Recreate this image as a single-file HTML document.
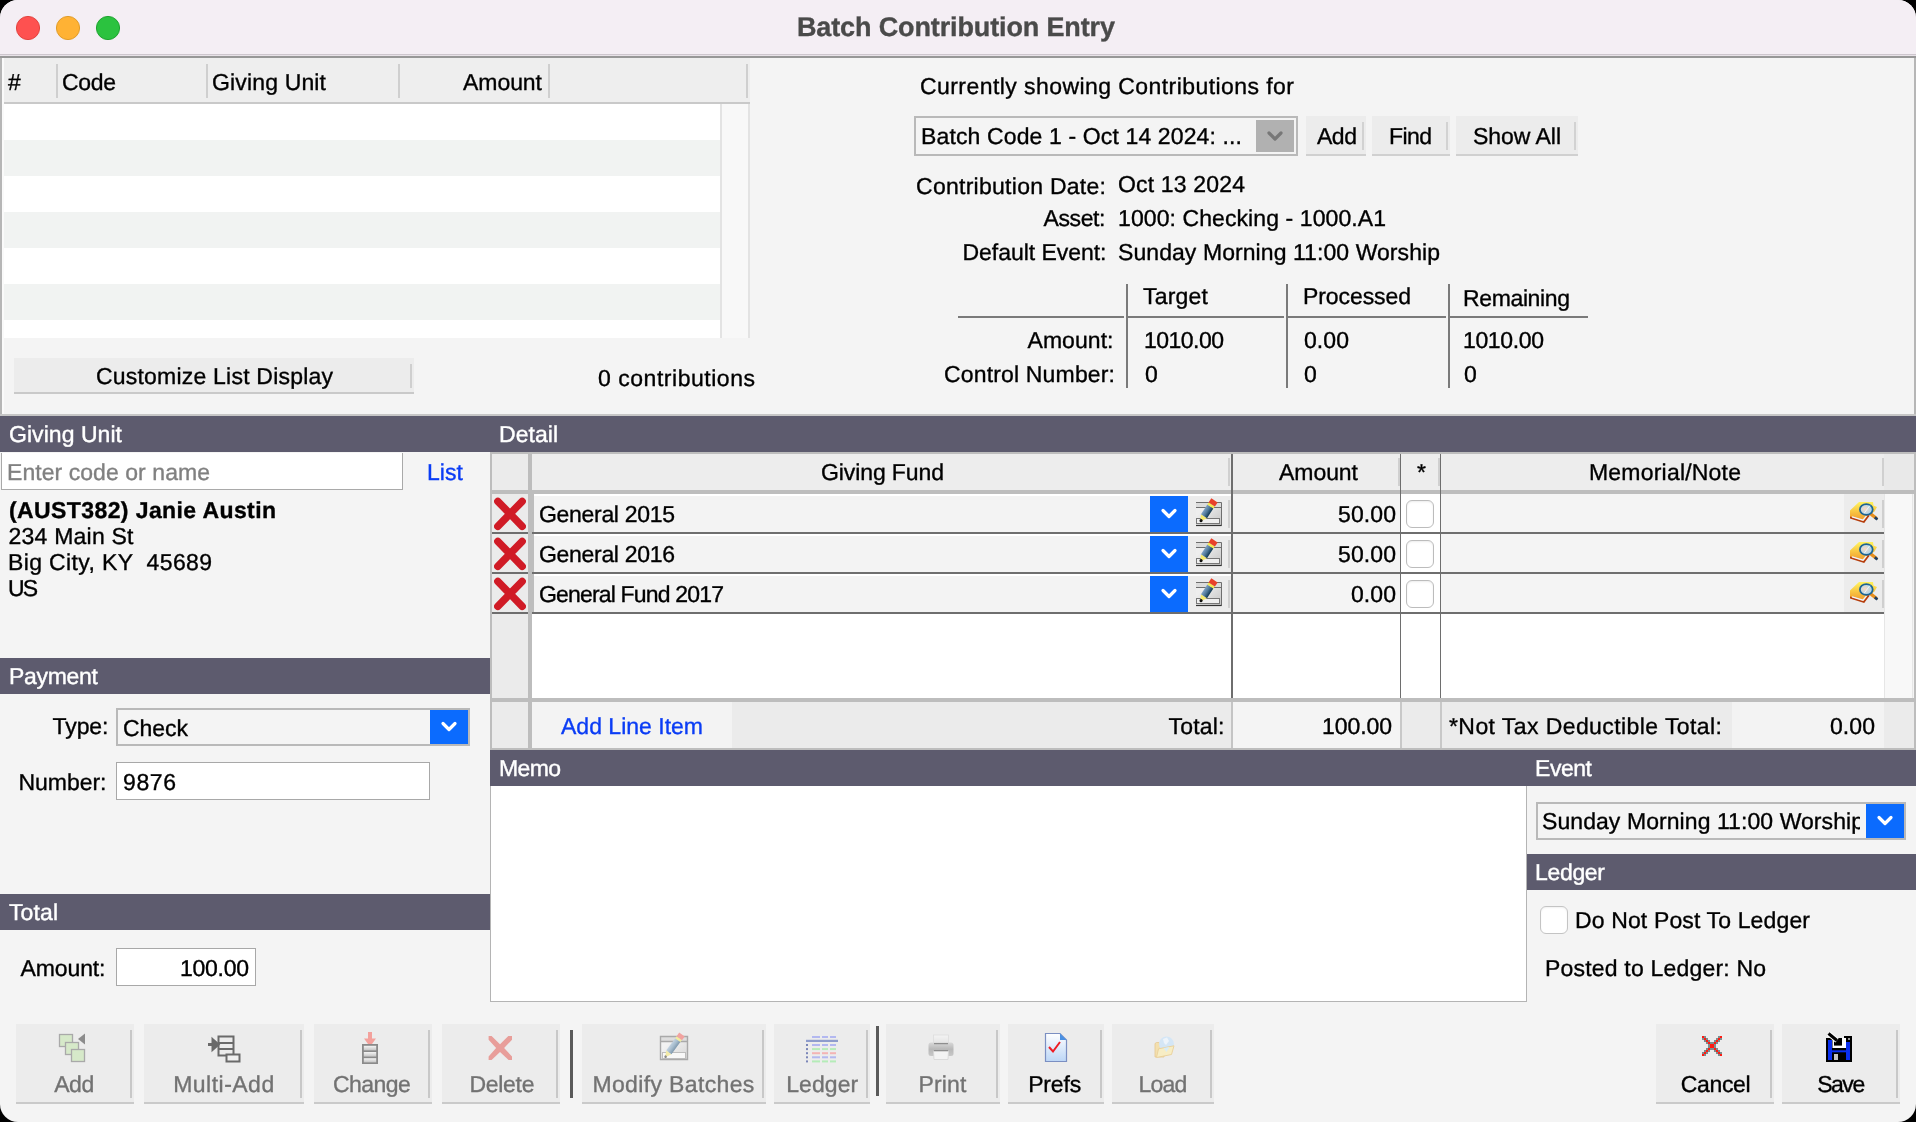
<!DOCTYPE html>
<html><head><meta charset="utf-8"><title>Batch Contribution Entry</title>
<style>
html,body{margin:0;padding:0;width:1916px;height:1122px;overflow:hidden;background:#000;}
#win{position:absolute;left:0;top:0;width:1916px;height:1122px;border-radius:18px;overflow:hidden;background:#f4f4f4;font-family:'Liberation Sans', sans-serif;text-rendering:geometricPrecision;will-change:transform;}
#win div{-webkit-text-stroke:0.35px currentColor;}
#win div,#win svg{position:absolute;}
</style></head><body><div id="win">
<div style="left:0px;top:0px;width:1916px;height:54px;background:#f4eef4;"></div>
<div style="left:0px;top:54px;width:1916px;height:1px;background:#cdc6cd;"></div>
<div style="left:0px;top:55px;width:1916px;height:1px;background:#e8e2e8;"></div>
<div style="left:0px;top:56px;width:1916px;height:2px;background:#979797;"></div>
<svg style="left:15px;top:15px;" width="26" height="26" viewBox="0 0 26 26"><circle cx="13" cy="13" r="11.6" fill="#fe5150" stroke="#e2443f" stroke-width="1"/></svg>
<svg style="left:55px;top:15px;" width="26" height="26" viewBox="0 0 26 26"><circle cx="13" cy="13" r="11.6" fill="#ffb234" stroke="#e09c2a" stroke-width="1"/></svg>
<svg style="left:95px;top:15px;" width="26" height="26" viewBox="0 0 26 26"><circle cx="13" cy="13" r="11.6" fill="#2bc23f" stroke="#1fa330" stroke-width="1"/></svg>
<div style="left:797.00px;top:14.00px;font-size:27px;line-height:27px;font-weight:700;color:#4a4a4a;letter-spacing:-0.130px;white-space:pre;">Batch Contribution Entry</div>
<div style="left:0px;top:58px;width:2px;height:357px;background:#b6b6b6;"></div>
<div style="left:2px;top:58px;width:2px;height:357px;background:#fafafa;"></div>
<div style="left:1914px;top:58px;width:2px;height:357px;background:#b6b6b6;"></div>
<div style="left:0px;top:414px;width:1916px;height:2px;background:#c6c6c6;"></div>
<div style="left:4px;top:58px;width:746px;height:44px;background:#eeeeee;"></div>
<div style="left:4px;top:102px;width:746px;height:2px;background:#c9c9c9;"></div>
<div style="left:56px;top:64px;width:2px;height:34px;background:#cfcfcf;"></div>
<div style="left:206px;top:64px;width:2px;height:34px;background:#cfcfcf;"></div>
<div style="left:398px;top:64px;width:2px;height:34px;background:#cfcfcf;"></div>
<div style="left:548px;top:64px;width:2px;height:34px;background:#cfcfcf;"></div>
<div style="left:746px;top:64px;width:2px;height:34px;background:#cfcfcf;"></div>
<div style="left:8.00px;top:71.00px;font-size:23px;line-height:23px;font-weight:400;color:#000;letter-spacing:0.000px;white-space:pre;">#</div>
<div style="left:62.00px;top:71.00px;font-size:23px;line-height:23px;font-weight:400;color:#000;letter-spacing:-0.328px;white-space:pre;">Code</div>
<div style="left:212.00px;top:71.00px;font-size:23px;line-height:23px;font-weight:400;color:#000;letter-spacing:0.152px;white-space:pre;">Giving Unit</div>
<div style="left:463.00px;top:71.00px;font-size:23px;line-height:23px;font-weight:400;color:#000;letter-spacing:-0.053px;white-space:pre;">Amount</div>
<div style="left:4px;top:104px;width:716px;height:36px;background:#ffffff;"></div>
<div style="left:4px;top:140px;width:716px;height:36px;background:#f1f3f2;"></div>
<div style="left:4px;top:176px;width:716px;height:36px;background:#ffffff;"></div>
<div style="left:4px;top:212px;width:716px;height:36px;background:#f1f3f2;"></div>
<div style="left:4px;top:248px;width:716px;height:36px;background:#ffffff;"></div>
<div style="left:4px;top:284px;width:716px;height:36px;background:#f1f3f2;"></div>
<div style="left:4px;top:320px;width:716px;height:18px;background:#ffffff;"></div>
<div style="left:720px;top:104px;width:2px;height:234px;background:#e3e3e3;"></div>
<div style="left:722px;top:104px;width:26px;height:234px;background:#f8f8f8;"></div>
<div style="left:748px;top:104px;width:2px;height:234px;background:#e3e3e3;"></div>
<div style="left:14px;top:358px;width:400px;height:36px;background:#ececec;"></div>
<div style="left:14px;top:392px;width:400px;height:2px;background:#c9c9c9;"></div>
<div style="left:410px;top:364px;width:2px;height:24px;background:#cfcfcf;"></div>
<div style="left:96.00px;top:365.00px;font-size:23px;line-height:23px;font-weight:400;color:#000;letter-spacing:0.208px;white-space:pre;">Customize List Display</div>
<div style="left:598.00px;top:367.00px;font-size:23px;line-height:23px;font-weight:400;color:#000;letter-spacing:0.529px;white-space:pre;">0 contributions</div>
<div style="left:920.00px;top:75.00px;font-size:23px;line-height:23px;font-weight:400;color:#000;letter-spacing:0.435px;white-space:pre;">Currently showing Contributions for</div>
<div style="left:914px;top:116px;width:384px;height:40px;box-sizing:border-box;border:2px solid #b9b9b9;background:#f4f4f4;"></div>
<div style="left:1256px;top:120px;width:38px;height:32px;background:#b1b1b1;"></div>
<svg style="left:1266px;top:128px;" width="18" height="14" viewBox="0 0 18 14"><polyline points="3,5 9,11 15,5" fill="none" stroke="#777" stroke-width="3.2" stroke-linecap="round" stroke-linejoin="round"/></svg>
<div style="left:921.00px;top:125.00px;font-size:23px;line-height:23px;font-weight:400;color:#000;letter-spacing:0.131px;white-space:pre;">Batch Code 1 - Oct 14 2024: ...</div>
<div style="left:1306px;top:116px;width:60px;height:40px;background:#ececec;"></div>
<div style="left:1306px;top:154px;width:60px;height:2px;background:#d0d0d0;"></div>
<div style="left:1362px;top:122px;width:2px;height:28px;background:#d2d2d2;"></div>
<div style="left:1372px;top:116px;width:78px;height:40px;background:#ececec;"></div>
<div style="left:1372px;top:154px;width:78px;height:2px;background:#d0d0d0;"></div>
<div style="left:1446px;top:122px;width:2px;height:28px;background:#d2d2d2;"></div>
<div style="left:1456px;top:116px;width:122px;height:40px;background:#ececec;"></div>
<div style="left:1456px;top:154px;width:122px;height:2px;background:#d0d0d0;"></div>
<div style="left:1574px;top:122px;width:2px;height:28px;background:#d2d2d2;"></div>
<div style="left:1317.00px;top:125.00px;font-size:23px;line-height:23px;font-weight:400;color:#000;letter-spacing:-0.469px;white-space:pre;">Add</div>
<div style="left:1389.00px;top:125.00px;font-size:23px;line-height:23px;font-weight:400;color:#000;letter-spacing:-0.583px;white-space:pre;">Find</div>
<div style="left:1473.00px;top:125.00px;font-size:23px;line-height:23px;font-weight:400;color:#000;letter-spacing:-0.031px;white-space:pre;">Show All</div>
<div style="left:916.00px;top:175.00px;font-size:23px;line-height:23px;font-weight:400;color:#000;letter-spacing:0.271px;white-space:pre;">Contribution Date:</div>
<div style="left:1118.00px;top:173.00px;font-size:23px;line-height:23px;font-weight:400;color:#000;letter-spacing:0.169px;white-space:pre;">Oct 13 2024</div>
<div style="left:1043.50px;top:207.00px;font-size:23px;line-height:23px;font-weight:400;color:#000;letter-spacing:-0.384px;white-space:pre;">Asset:</div>
<div style="left:1118.00px;top:207.00px;font-size:23px;line-height:23px;font-weight:400;color:#000;letter-spacing:0.088px;white-space:pre;">1000: Checking - 1000.A1</div>
<div style="left:962.50px;top:241.00px;font-size:23px;line-height:23px;font-weight:400;color:#000;letter-spacing:-0.036px;white-space:pre;">Default Event:</div>
<div style="left:1118.00px;top:241.00px;font-size:23px;line-height:23px;font-weight:400;color:#000;letter-spacing:0.072px;white-space:pre;">Sunday Morning 11:00 Worship</div>
<div style="left:958px;top:316px;width:166px;height:2px;background:#7a7a7a;"></div>
<div style="left:1128px;top:316px;width:156px;height:2px;background:#7a7a7a;"></div>
<div style="left:1288px;top:316px;width:158px;height:2px;background:#7a7a7a;"></div>
<div style="left:1450px;top:316px;width:138px;height:2px;background:#7a7a7a;"></div>
<div style="left:1126px;top:284px;width:2px;height:104px;background:#7a7a7a;"></div>
<div style="left:1286px;top:284px;width:2px;height:104px;background:#7a7a7a;"></div>
<div style="left:1448px;top:284px;width:2px;height:104px;background:#7a7a7a;"></div>
<div style="left:1143.00px;top:285.00px;font-size:23px;line-height:23px;font-weight:400;color:#000;letter-spacing:0.212px;white-space:pre;">Target</div>
<div style="left:1303.00px;top:285.00px;font-size:23px;line-height:23px;font-weight:400;color:#000;letter-spacing:-0.084px;white-space:pre;">Processed</div>
<div style="left:1463.00px;top:287.00px;font-size:23px;line-height:23px;font-weight:400;color:#000;letter-spacing:-0.369px;white-space:pre;">Remaining</div>
<div style="left:1027.50px;top:329.00px;font-size:23px;line-height:23px;font-weight:400;color:#000;letter-spacing:0.057px;white-space:pre;">Amount:</div>
<div style="left:1144.00px;top:329.00px;font-size:23px;line-height:23px;font-weight:400;color:#000;letter-spacing:-0.523px;white-space:pre;">1010.00</div>
<div style="left:1304.00px;top:329.00px;font-size:23px;line-height:23px;font-weight:400;color:#000;letter-spacing:0.078px;white-space:pre;">0.00</div>
<div style="left:1463.00px;top:329.00px;font-size:23px;line-height:23px;font-weight:400;color:#000;letter-spacing:-0.357px;white-space:pre;">1010.00</div>
<div style="left:944.00px;top:363.00px;font-size:23px;line-height:23px;font-weight:400;color:#000;letter-spacing:0.162px;white-space:pre;">Control Number:</div>
<div style="left:1145.00px;top:363.00px;font-size:23px;line-height:23px;font-weight:400;color:#000;letter-spacing:0.000px;white-space:pre;">0</div>
<div style="left:1304.00px;top:363.00px;font-size:23px;line-height:23px;font-weight:400;color:#000;letter-spacing:0.000px;white-space:pre;">0</div>
<div style="left:1464.00px;top:363.00px;font-size:23px;line-height:23px;font-weight:400;color:#000;letter-spacing:0.000px;white-space:pre;">0</div>
<div style="left:0px;top:416px;width:1916px;height:36px;background:#5d5b6e;"></div>
<div style="left:9.00px;top:423.00px;font-size:23px;line-height:23px;font-weight:400;color:#fff;letter-spacing:0.052px;white-space:pre;-webkit-text-stroke:0.4px #fff;">Giving Unit</div>
<div style="left:499.00px;top:423.00px;font-size:23px;line-height:23px;font-weight:400;color:#fff;letter-spacing:0.037px;white-space:pre;-webkit-text-stroke:0.4px #fff;">Detail</div>
<div style="left:0px;top:658px;width:490px;height:36px;background:#5d5b6e;"></div>
<div style="left:9.00px;top:665.00px;font-size:23px;line-height:23px;font-weight:400;color:#fff;letter-spacing:-0.294px;white-space:pre;-webkit-text-stroke:0.4px #fff;">Payment</div>
<div style="left:0px;top:894px;width:490px;height:36px;background:#5d5b6e;"></div>
<div style="left:9.00px;top:901.00px;font-size:23px;line-height:23px;font-weight:400;color:#fff;letter-spacing:0.102px;white-space:pre;-webkit-text-stroke:0.4px #fff;">Total</div>
<div style="left:490px;top:750px;width:1426px;height:36px;background:#5d5b6e;"></div>
<div style="left:499.00px;top:757.00px;font-size:23px;line-height:23px;font-weight:400;color:#fff;letter-spacing:-0.635px;white-space:pre;-webkit-text-stroke:0.4px #fff;">Memo</div>
<div style="left:1535.00px;top:757.00px;font-size:23px;line-height:23px;font-weight:400;color:#fff;letter-spacing:-0.457px;white-space:pre;-webkit-text-stroke:0.4px #fff;">Event</div>
<div style="left:1526px;top:854px;width:390px;height:36px;background:#5d5b6e;"></div>
<div style="left:1535.00px;top:861.00px;font-size:23px;line-height:23px;font-weight:400;color:#fff;letter-spacing:-0.325px;white-space:pre;-webkit-text-stroke:0.4px #fff;">Ledger</div>
<div style="left:1px;top:453px;width:402px;height:37px;box-sizing:border-box;border:1px solid #a9a9a9;background:#ffffff;border-top:none;"></div>
<div style="left:7.00px;top:461.00px;font-size:23px;line-height:23px;font-weight:400;color:#808080;letter-spacing:0.058px;white-space:pre;">Enter code or name</div>
<div style="left:427.00px;top:461.00px;font-size:23px;line-height:23px;font-weight:400;color:#0a3cf5;letter-spacing:0.068px;white-space:pre;">List</div>
<div style="left:9.00px;top:499.00px;font-size:23px;line-height:23px;font-weight:700;color:#000;letter-spacing:0.400px;white-space:pre;">(AUST382) Janie Austin</div>
<div style="left:8.50px;top:525.00px;font-size:23px;line-height:23px;font-weight:400;color:#000;letter-spacing:0.225px;white-space:pre;">234 Main St</div>
<div style="left:8.00px;top:551.00px;font-size:23px;line-height:23px;font-weight:400;color:#000;letter-spacing:0.371px;white-space:pre;">Big City, KY  45689</div>
<div style="left:8.00px;top:577.00px;font-size:23px;line-height:23px;font-weight:400;color:#000;letter-spacing:-1.953px;white-space:pre;">US</div>
<div style="left:52.50px;top:715.00px;font-size:23px;line-height:23px;font-weight:400;color:#000;letter-spacing:-0.066px;white-space:pre;">Type:</div>
<div style="left:116px;top:708px;width:354px;height:38px;box-sizing:border-box;border:2px solid #b9b9b9;background:#f4f4f4;"></div>
<div style="left:430px;top:710px;width:38px;height:34px;background:#0b6bfe;"></div>
<svg style="left:440px;top:720px;" width="18" height="14" viewBox="0 0 18 14"><polyline points="3,3.5 9,9.5 15,3.5" fill="none" stroke="#fff" stroke-width="3.2" stroke-linecap="round" stroke-linejoin="round"/></svg>
<div style="left:123.00px;top:717.00px;font-size:23px;line-height:23px;font-weight:400;color:#000;letter-spacing:-0.051px;white-space:pre;">Check</div>
<div style="left:18.50px;top:771.00px;font-size:23px;line-height:23px;font-weight:400;color:#000;letter-spacing:-0.034px;white-space:pre;">Number:</div>
<div style="left:116px;top:762px;width:314px;height:38px;box-sizing:border-box;border:1px solid #a8a8a8;background:#ffffff;"></div>
<div style="left:123.00px;top:771.00px;font-size:23px;line-height:23px;font-weight:400;color:#000;letter-spacing:0.609px;white-space:pre;">9876</div>
<div style="left:20.50px;top:957.00px;font-size:23px;line-height:23px;font-weight:400;color:#000;letter-spacing:-0.109px;white-space:pre;">Amount:</div>
<div style="left:116px;top:948px;width:140px;height:38px;box-sizing:border-box;border:1px solid #a8a8a8;background:#ffffff;"></div>
<div style="left:180.00px;top:957.00px;font-size:23px;line-height:23px;font-weight:400;color:#000;letter-spacing:-0.272px;white-space:pre;">100.00</div>
<div style="left:490px;top:452px;width:2px;height:298px;background:#bdbdbd;"></div>
<div style="left:490px;top:452px;width:1426px;height:2px;background:#bdbdbd;"></div>
<div style="left:492px;top:454px;width:1422px;height:36px;background:#ededed;"></div>
<div style="left:492px;top:454px;width:36px;height:36px;background:#ebebeb;"></div>
<div style="left:490px;top:490px;width:1424px;height:4px;background:#bdbdbd;"></div>
<div style="left:528px;top:452px;width:4px;height:298px;background:#bdbdbd;"></div>
<div style="left:492px;top:494px;width:36px;height:208px;background:#ebebeb;"></div>
<div style="left:532px;top:494px;width:1352px;height:204px;background:#ffffff;"></div>
<div style="left:1884px;top:494px;width:1px;height:204px;background:#e6e6e6;"></div>
<div style="left:1885px;top:494px;width:28px;height:204px;background:#f8f8f8;"></div>
<div style="left:1912px;top:494px;width:1px;height:204px;background:#e6e6e6;"></div>
<div style="left:1914px;top:452px;width:2px;height:298px;background:#bdbdbd;"></div>
<div style="left:1884px;top:454px;width:30px;height:36px;background:#e9e9e9;"></div>
<div style="left:821.00px;top:461.00px;font-size:23px;line-height:23px;font-weight:400;color:#000;letter-spacing:-0.102px;white-space:pre;">Giving Fund</div>
<div style="left:1228px;top:458px;width:2px;height:28px;background:#d0d0d0;"></div>
<div style="left:1279.00px;top:461.00px;font-size:23px;line-height:23px;font-weight:400;color:#000;letter-spacing:-0.053px;white-space:pre;">Amount</div>
<div style="left:1398px;top:458px;width:2px;height:28px;background:#d0d0d0;"></div>
<div style="left:1417.00px;top:461.00px;font-size:23px;line-height:23px;font-weight:400;color:#000;letter-spacing:0.000px;white-space:pre;">*</div>
<div style="left:1438px;top:458px;width:2px;height:28px;background:#d0d0d0;"></div>
<div style="left:1589.00px;top:461.00px;font-size:23px;line-height:23px;font-weight:400;color:#000;letter-spacing:0.204px;white-space:pre;">Memorial/Note</div>
<div style="left:1882px;top:458px;width:2px;height:28px;background:#d0d0d0;"></div>
<svg style="left:494px;top:497px;" width="32" height="34" viewBox="0 0 32 34"><path d="M3.8 4.3 L28.2 29.4 M28.2 4.3 L3.8 29.4" stroke="#d01b26" stroke-width="7.4" stroke-linecap="round"/></svg>
<div style="left:492px;top:532px;width:36px;height:2px;background:#6e6e6e;"></div>
<div style="left:532px;top:494px;width:2px;height:38px;background:#bdbdbd;"></div>
<div style="left:534px;top:496px;width:616px;height:36px;background:#f3f3f3;"></div>
<div style="left:539.00px;top:503.00px;font-size:23px;line-height:23px;font-weight:400;color:#000;letter-spacing:-0.308px;white-space:pre;">General 2015</div>
<div style="left:1150px;top:496px;width:38px;height:36px;background:#0b6bfe;"></div>
<svg style="left:1160px;top:507px;" width="18" height="14" viewBox="0 0 18 14"><polyline points="3,3.5 9,9.5 15,3.5" fill="none" stroke="#fff" stroke-width="3.2" stroke-linecap="round" stroke-linejoin="round"/></svg>
<div style="left:1188px;top:496px;width:43px;height:36px;background:#ececec;"></div>
<svg style="left:1190px;top:496px;" width="42" height="36" viewBox="0 0 42 36"><defs><linearGradient id="pbx" x1="0" y1="0" x2="1" y2="1"><stop offset="0.3" stop-color="#eeeeee"/><stop offset="1" stop-color="#c4c4c4"/></linearGradient><linearGradient id="pbl" x1="0" y1="0" x2="0" y2="1"><stop offset="0" stop-color="#7fa2c4"/><stop offset="0.5" stop-color="#4f7898"/><stop offset="1" stop-color="#0f3650"/></linearGradient></defs><rect x="6" y="6" width="25.5" height="23.5" fill="url(#pbx)"/><rect x="6" y="6.5" width="25" height="5" fill="#dcdcdc"/><path d="M6 6.5 H31.5 V29.5 H6 M6 11.5 H31.5" fill="none" stroke="#6e6e6e" stroke-width="1"/><path d="M6 29.5 H31.5" stroke="#333" stroke-width="1.2"/><rect x="6.5" y="22.5" width="23" height="5" fill="#efefef" stroke="#777" stroke-width="1"/><g transform="translate(10.4 25.6) rotate(-56.5)"><path d="M0 0 L6.5 -3.6 L6.5 3.6 Z" fill="#f6ea70"/><rect x="6.5" y="-3.6" width="11.5" height="7.2" fill="url(#pbl)"/><rect x="18" y="-3.6" width="2.5" height="7.2" fill="#f2ea50"/><rect x="20.5" y="-3.8" width="5" height="7.6" fill="#e8402a"/><circle cx="1.2" cy="0" r="1.6" fill="#111"/></g></svg>
<div style="left:1228px;top:500px;width:2px;height:28px;background:#cfcfcf;"></div>
<div style="left:1233px;top:494px;width:167px;height:38px;background:#f4f4f4;"></div>
<div style="left:1338.00px;top:503.00px;font-size:23px;line-height:23px;font-weight:400;color:#000;letter-spacing:0.109px;white-space:pre;">50.00</div>
<div style="left:1406px;top:500px;width:28px;height:28px;box-sizing:border-box;border:1px solid #bcbcbc;background:#ffffff;border-radius:6px;box-shadow:inset 0 1px 2px rgba(0,0,0,0.08);"></div>
<div style="left:1441px;top:494px;width:403px;height:38px;background:#f4f4f4;"></div>
<div style="left:1844px;top:494px;width:40px;height:38px;background:#ececec;"></div>
<svg style="left:1844px;top:496px;" width="40" height="36" viewBox="0 0 40 36"><defs><linearGradient id="bk" x1="0" y1="0" x2="0" y2="1"><stop offset="0" stop-color="#fff35c"/><stop offset="1" stop-color="#f0962a"/></linearGradient><radialGradient id="gl" cx="0.4" cy="0.45" r="0.6"><stop offset="0" stop-color="#fbd9c2"/><stop offset="1" stop-color="#9fd6f2"/></radialGradient></defs><path d="M6 21.5 L6 14.5 L15 6 L29 6 L29.5 9.5 L33 11 L30.5 15.5 L24.5 19.5 L19.5 25.5 Z" fill="url(#bk)"/><path d="M6 20.5 L19.5 25 L24 19 L25.8 19.6 L20.2 27 L6 22.5 Z" fill="#b63d0c"/><path d="M8 20.8 L19 24.2 L22.5 19.8" fill="none" stroke="#eef2ff" stroke-width="1.3"/><path d="M27.2 18.2 L32.2 22.3" stroke="#e8901c" stroke-width="3.4" stroke-linecap="round"/><path d="M30.8 21.2 L33.4 23.4" stroke="#1a3f6a" stroke-width="2.6"/><ellipse cx="22.3" cy="13.5" rx="6.4" ry="5.4" fill="url(#gl)" stroke="#1d6494" stroke-width="1.8"/><path d="M20.2 17.2 L25.8 9.6" stroke="#eaf7ff" stroke-width="1"/></svg>
<div style="left:1882px;top:500px;width:2px;height:28px;background:#cfcfcf;"></div>
<div style="left:532px;top:532px;width:1352px;height:2px;background:#6e6e6e;"></div>
<svg style="left:494px;top:537px;" width="32" height="34" viewBox="0 0 32 34"><path d="M3.8 4.3 L28.2 29.4 M28.2 4.3 L3.8 29.4" stroke="#d01b26" stroke-width="7.4" stroke-linecap="round"/></svg>
<div style="left:492px;top:572px;width:36px;height:2px;background:#6e6e6e;"></div>
<div style="left:532px;top:534px;width:2px;height:38px;background:#bdbdbd;"></div>
<div style="left:534px;top:536px;width:616px;height:36px;background:#f3f3f3;"></div>
<div style="left:539.00px;top:543.00px;font-size:23px;line-height:23px;font-weight:400;color:#000;letter-spacing:-0.308px;white-space:pre;">General 2016</div>
<div style="left:1150px;top:536px;width:38px;height:36px;background:#0b6bfe;"></div>
<svg style="left:1160px;top:547px;" width="18" height="14" viewBox="0 0 18 14"><polyline points="3,3.5 9,9.5 15,3.5" fill="none" stroke="#fff" stroke-width="3.2" stroke-linecap="round" stroke-linejoin="round"/></svg>
<div style="left:1188px;top:536px;width:43px;height:36px;background:#ececec;"></div>
<svg style="left:1190px;top:536px;" width="42" height="36" viewBox="0 0 42 36"><defs><linearGradient id="pbx" x1="0" y1="0" x2="1" y2="1"><stop offset="0.3" stop-color="#eeeeee"/><stop offset="1" stop-color="#c4c4c4"/></linearGradient><linearGradient id="pbl" x1="0" y1="0" x2="0" y2="1"><stop offset="0" stop-color="#7fa2c4"/><stop offset="0.5" stop-color="#4f7898"/><stop offset="1" stop-color="#0f3650"/></linearGradient></defs><rect x="6" y="6" width="25.5" height="23.5" fill="url(#pbx)"/><rect x="6" y="6.5" width="25" height="5" fill="#dcdcdc"/><path d="M6 6.5 H31.5 V29.5 H6 M6 11.5 H31.5" fill="none" stroke="#6e6e6e" stroke-width="1"/><path d="M6 29.5 H31.5" stroke="#333" stroke-width="1.2"/><rect x="6.5" y="22.5" width="23" height="5" fill="#efefef" stroke="#777" stroke-width="1"/><g transform="translate(10.4 25.6) rotate(-56.5)"><path d="M0 0 L6.5 -3.6 L6.5 3.6 Z" fill="#f6ea70"/><rect x="6.5" y="-3.6" width="11.5" height="7.2" fill="url(#pbl)"/><rect x="18" y="-3.6" width="2.5" height="7.2" fill="#f2ea50"/><rect x="20.5" y="-3.8" width="5" height="7.6" fill="#e8402a"/><circle cx="1.2" cy="0" r="1.6" fill="#111"/></g></svg>
<div style="left:1228px;top:540px;width:2px;height:28px;background:#cfcfcf;"></div>
<div style="left:1233px;top:534px;width:167px;height:38px;background:#f4f4f4;"></div>
<div style="left:1338.00px;top:543.00px;font-size:23px;line-height:23px;font-weight:400;color:#000;letter-spacing:0.109px;white-space:pre;">50.00</div>
<div style="left:1406px;top:540px;width:28px;height:28px;box-sizing:border-box;border:1px solid #bcbcbc;background:#ffffff;border-radius:6px;box-shadow:inset 0 1px 2px rgba(0,0,0,0.08);"></div>
<div style="left:1441px;top:534px;width:403px;height:38px;background:#f4f4f4;"></div>
<div style="left:1844px;top:534px;width:40px;height:38px;background:#ececec;"></div>
<svg style="left:1844px;top:536px;" width="40" height="36" viewBox="0 0 40 36"><defs><linearGradient id="bk" x1="0" y1="0" x2="0" y2="1"><stop offset="0" stop-color="#fff35c"/><stop offset="1" stop-color="#f0962a"/></linearGradient><radialGradient id="gl" cx="0.4" cy="0.45" r="0.6"><stop offset="0" stop-color="#fbd9c2"/><stop offset="1" stop-color="#9fd6f2"/></radialGradient></defs><path d="M6 21.5 L6 14.5 L15 6 L29 6 L29.5 9.5 L33 11 L30.5 15.5 L24.5 19.5 L19.5 25.5 Z" fill="url(#bk)"/><path d="M6 20.5 L19.5 25 L24 19 L25.8 19.6 L20.2 27 L6 22.5 Z" fill="#b63d0c"/><path d="M8 20.8 L19 24.2 L22.5 19.8" fill="none" stroke="#eef2ff" stroke-width="1.3"/><path d="M27.2 18.2 L32.2 22.3" stroke="#e8901c" stroke-width="3.4" stroke-linecap="round"/><path d="M30.8 21.2 L33.4 23.4" stroke="#1a3f6a" stroke-width="2.6"/><ellipse cx="22.3" cy="13.5" rx="6.4" ry="5.4" fill="url(#gl)" stroke="#1d6494" stroke-width="1.8"/><path d="M20.2 17.2 L25.8 9.6" stroke="#eaf7ff" stroke-width="1"/></svg>
<div style="left:1882px;top:540px;width:2px;height:28px;background:#cfcfcf;"></div>
<div style="left:532px;top:572px;width:1352px;height:2px;background:#6e6e6e;"></div>
<svg style="left:494px;top:577px;" width="32" height="34" viewBox="0 0 32 34"><path d="M3.8 4.3 L28.2 29.4 M28.2 4.3 L3.8 29.4" stroke="#d01b26" stroke-width="7.4" stroke-linecap="round"/></svg>
<div style="left:492px;top:612px;width:36px;height:2px;background:#6e6e6e;"></div>
<div style="left:532px;top:574px;width:2px;height:38px;background:#bdbdbd;"></div>
<div style="left:534px;top:576px;width:616px;height:36px;background:#f3f3f3;"></div>
<div style="left:539.00px;top:583.00px;font-size:23px;line-height:23px;font-weight:400;color:#000;letter-spacing:-0.825px;white-space:pre;">General Fund 2017</div>
<div style="left:1150px;top:576px;width:38px;height:36px;background:#0b6bfe;"></div>
<svg style="left:1160px;top:587px;" width="18" height="14" viewBox="0 0 18 14"><polyline points="3,3.5 9,9.5 15,3.5" fill="none" stroke="#fff" stroke-width="3.2" stroke-linecap="round" stroke-linejoin="round"/></svg>
<div style="left:1188px;top:576px;width:43px;height:36px;background:#ececec;"></div>
<svg style="left:1190px;top:576px;" width="42" height="36" viewBox="0 0 42 36"><defs><linearGradient id="pbx" x1="0" y1="0" x2="1" y2="1"><stop offset="0.3" stop-color="#eeeeee"/><stop offset="1" stop-color="#c4c4c4"/></linearGradient><linearGradient id="pbl" x1="0" y1="0" x2="0" y2="1"><stop offset="0" stop-color="#7fa2c4"/><stop offset="0.5" stop-color="#4f7898"/><stop offset="1" stop-color="#0f3650"/></linearGradient></defs><rect x="6" y="6" width="25.5" height="23.5" fill="url(#pbx)"/><rect x="6" y="6.5" width="25" height="5" fill="#dcdcdc"/><path d="M6 6.5 H31.5 V29.5 H6 M6 11.5 H31.5" fill="none" stroke="#6e6e6e" stroke-width="1"/><path d="M6 29.5 H31.5" stroke="#333" stroke-width="1.2"/><rect x="6.5" y="22.5" width="23" height="5" fill="#efefef" stroke="#777" stroke-width="1"/><g transform="translate(10.4 25.6) rotate(-56.5)"><path d="M0 0 L6.5 -3.6 L6.5 3.6 Z" fill="#f6ea70"/><rect x="6.5" y="-3.6" width="11.5" height="7.2" fill="url(#pbl)"/><rect x="18" y="-3.6" width="2.5" height="7.2" fill="#f2ea50"/><rect x="20.5" y="-3.8" width="5" height="7.6" fill="#e8402a"/><circle cx="1.2" cy="0" r="1.6" fill="#111"/></g></svg>
<div style="left:1228px;top:580px;width:2px;height:28px;background:#cfcfcf;"></div>
<div style="left:1233px;top:574px;width:167px;height:38px;background:#f4f4f4;"></div>
<div style="left:1351.00px;top:583.00px;font-size:23px;line-height:23px;font-weight:400;color:#000;letter-spacing:0.078px;white-space:pre;">0.00</div>
<div style="left:1406px;top:580px;width:28px;height:28px;box-sizing:border-box;border:1px solid #bcbcbc;background:#ffffff;border-radius:6px;box-shadow:inset 0 1px 2px rgba(0,0,0,0.08);"></div>
<div style="left:1441px;top:574px;width:403px;height:38px;background:#f4f4f4;"></div>
<div style="left:1844px;top:574px;width:40px;height:38px;background:#ececec;"></div>
<svg style="left:1844px;top:576px;" width="40" height="36" viewBox="0 0 40 36"><defs><linearGradient id="bk" x1="0" y1="0" x2="0" y2="1"><stop offset="0" stop-color="#fff35c"/><stop offset="1" stop-color="#f0962a"/></linearGradient><radialGradient id="gl" cx="0.4" cy="0.45" r="0.6"><stop offset="0" stop-color="#fbd9c2"/><stop offset="1" stop-color="#9fd6f2"/></radialGradient></defs><path d="M6 21.5 L6 14.5 L15 6 L29 6 L29.5 9.5 L33 11 L30.5 15.5 L24.5 19.5 L19.5 25.5 Z" fill="url(#bk)"/><path d="M6 20.5 L19.5 25 L24 19 L25.8 19.6 L20.2 27 L6 22.5 Z" fill="#b63d0c"/><path d="M8 20.8 L19 24.2 L22.5 19.8" fill="none" stroke="#eef2ff" stroke-width="1.3"/><path d="M27.2 18.2 L32.2 22.3" stroke="#e8901c" stroke-width="3.4" stroke-linecap="round"/><path d="M30.8 21.2 L33.4 23.4" stroke="#1a3f6a" stroke-width="2.6"/><ellipse cx="22.3" cy="13.5" rx="6.4" ry="5.4" fill="url(#gl)" stroke="#1d6494" stroke-width="1.8"/><path d="M20.2 17.2 L25.8 9.6" stroke="#eaf7ff" stroke-width="1"/></svg>
<div style="left:1882px;top:580px;width:2px;height:28px;background:#cfcfcf;"></div>
<div style="left:532px;top:612px;width:1352px;height:2px;background:#6e6e6e;"></div>
<div style="left:1231px;top:454px;width:2px;height:244px;background:#6e6e6e;"></div>
<div style="left:1400px;top:454px;width:1px;height:244px;background:#6e6e6e;"></div>
<div style="left:1440px;top:454px;width:1px;height:244px;background:#6e6e6e;"></div>
<div style="left:490px;top:698px;width:1424px;height:4px;background:#bdbdbd;"></div>
<div style="left:492px;top:702px;width:36px;height:46px;background:#ebebeb;"></div>
<div style="left:532px;top:702px;width:1382px;height:46px;background:#ebebeb;"></div>
<div style="left:532px;top:702px;width:200px;height:46px;background:#f3f3f3;"></div>
<div style="left:561.00px;top:715.00px;font-size:23px;line-height:23px;font-weight:400;color:#0a3cf5;letter-spacing:0.007px;white-space:pre;">Add Line Item</div>
<div style="left:1168.50px;top:715.00px;font-size:23px;line-height:23px;font-weight:400;color:#000;letter-spacing:0.203px;white-space:pre;">Total:</div>
<div style="left:1233px;top:702px;width:167px;height:46px;background:#f4f4f4;"></div>
<div style="left:1322.00px;top:715.00px;font-size:23px;line-height:23px;font-weight:400;color:#000;letter-spacing:-0.072px;white-space:pre;">100.00</div>
<div style="left:1401px;top:702px;width:39px;height:46px;background:#ebebeb;"></div>
<div style="left:1449.00px;top:715.00px;font-size:23px;line-height:23px;font-weight:400;color:#000;letter-spacing:0.419px;white-space:pre;">*Not Tax Deductible Total:</div>
<div style="left:1732px;top:702px;width:152px;height:46px;background:#f3f3f3;"></div>
<div style="left:1830.00px;top:715.00px;font-size:23px;line-height:23px;font-weight:400;color:#000;letter-spacing:0.078px;white-space:pre;">0.00</div>
<div style="left:1231px;top:702px;width:2px;height:46px;background:#c4c4c4;"></div>
<div style="left:1400px;top:702px;width:2px;height:46px;background:#c8c8c8;"></div>
<div style="left:1440px;top:702px;width:2px;height:46px;background:#c8c8c8;"></div>
<div style="left:490px;top:748px;width:1426px;height:2px;background:#bdbdbd;"></div>
<div style="left:490px;top:786px;width:1037px;height:216px;box-sizing:border-box;border:1px solid #b4b4b4;background:#ffffff;border-top:none;"></div>
<div style="left:1536px;top:802px;width:370px;height:38px;box-sizing:border-box;border:2px solid #b9b9b9;background:#f4f4f4;"></div>
<div style="left:1542.00px;top:810.00px;font-size:23px;line-height:23px;font-weight:400;color:#000;letter-spacing:0.072px;white-space:pre;clip-path:inset(-10px calc(100% - 318px) -10px -10px);">Sunday Morning 11:00 Worship</div>
<div style="left:1866px;top:804px;width:38px;height:34px;background:#0b6bfe;"></div>
<svg style="left:1876px;top:814px;" width="18" height="14" viewBox="0 0 18 14"><polyline points="3,3.5 9,9.5 15,3.5" fill="none" stroke="#fff" stroke-width="3.2" stroke-linecap="round" stroke-linejoin="round"/></svg>
<div style="left:1540px;top:906px;width:28px;height:28px;box-sizing:border-box;border:1px solid #c4c4c4;background:#ffffff;border-radius:6px;box-shadow:inset 0 1px 2px rgba(0,0,0,0.06);"></div>
<div style="left:1575.00px;top:909.00px;font-size:23px;line-height:23px;font-weight:400;color:#000;letter-spacing:0.136px;white-space:pre;">Do Not Post To Ledger</div>
<div style="left:1545.00px;top:957.00px;font-size:23px;line-height:23px;font-weight:400;color:#000;letter-spacing:0.191px;white-space:pre;">Posted to Ledger: No</div>
<div style="left:16px;top:1024px;width:118px;height:80px;background:#ececec;"></div>
<div style="left:16px;top:1102px;width:118px;height:2px;background:#cacaca;"></div>
<div style="left:130px;top:1030px;width:2px;height:68px;background:#c8c8c8;"></div>
<div style="left:54.20px;top:1073.00px;font-size:23px;line-height:23px;font-weight:400;color:#727272;letter-spacing:-0.469px;white-space:pre;">Add</div>
<div style="left:144px;top:1024px;width:160px;height:80px;background:#ececec;"></div>
<div style="left:144px;top:1102px;width:160px;height:2px;background:#cacaca;"></div>
<div style="left:300px;top:1030px;width:2px;height:68px;background:#c8c8c8;"></div>
<div style="left:173.20px;top:1073.00px;font-size:23px;line-height:23px;font-weight:400;color:#727272;letter-spacing:0.480px;white-space:pre;">Multi-Add</div>
<div style="left:314px;top:1024px;width:118px;height:80px;background:#ececec;"></div>
<div style="left:314px;top:1102px;width:118px;height:2px;background:#cacaca;"></div>
<div style="left:428px;top:1030px;width:2px;height:68px;background:#c8c8c8;"></div>
<div style="left:332.90px;top:1073.00px;font-size:23px;line-height:23px;font-weight:400;color:#727272;letter-spacing:-0.516px;white-space:pre;">Change</div>
<div style="left:442px;top:1024px;width:118px;height:80px;background:#ececec;"></div>
<div style="left:442px;top:1102px;width:118px;height:2px;background:#cacaca;"></div>
<div style="left:556px;top:1030px;width:2px;height:68px;background:#c8c8c8;"></div>
<div style="left:469.50px;top:1073.00px;font-size:23px;line-height:23px;font-weight:400;color:#727272;letter-spacing:-0.297px;white-space:pre;">Delete</div>
<div style="left:570px;top:1030px;width:3px;height:68px;background:#5a5a5a;"></div>
<div style="left:582px;top:1024px;width:184px;height:80px;background:#ececec;"></div>
<div style="left:582px;top:1102px;width:184px;height:2px;background:#cacaca;"></div>
<div style="left:762px;top:1030px;width:2px;height:68px;background:#c8c8c8;"></div>
<div style="left:592.40px;top:1073.00px;font-size:23px;line-height:23px;font-weight:400;color:#727272;letter-spacing:0.365px;white-space:pre;">Modify Batches</div>
<div style="left:774px;top:1024px;width:96px;height:80px;background:#ececec;"></div>
<div style="left:774px;top:1102px;width:96px;height:2px;background:#cacaca;"></div>
<div style="left:866px;top:1030px;width:2px;height:68px;background:#c8c8c8;"></div>
<div style="left:786.20px;top:1073.00px;font-size:23px;line-height:23px;font-weight:400;color:#727272;letter-spacing:0.075px;white-space:pre;">Ledger</div>
<div style="left:876px;top:1026px;width:3px;height:70px;background:#5a5a5a;"></div>
<div style="left:886px;top:1024px;width:114px;height:80px;background:#ececec;"></div>
<div style="left:886px;top:1102px;width:114px;height:2px;background:#cacaca;"></div>
<div style="left:996px;top:1030px;width:2px;height:68px;background:#c8c8c8;"></div>
<div style="left:918.40px;top:1073.00px;font-size:23px;line-height:23px;font-weight:400;color:#727272;letter-spacing:0.176px;white-space:pre;">Print</div>
<div style="left:1008px;top:1024px;width:96px;height:80px;background:#ececec;"></div>
<div style="left:1008px;top:1102px;width:96px;height:2px;background:#cacaca;"></div>
<div style="left:1100px;top:1030px;width:2px;height:68px;background:#c8c8c8;"></div>
<div style="left:1028.20px;top:1073.00px;font-size:23px;line-height:23px;font-weight:400;color:#000;letter-spacing:-0.172px;white-space:pre;">Prefs</div>
<div style="left:1112px;top:1024px;width:102px;height:80px;background:#ececec;"></div>
<div style="left:1112px;top:1102px;width:102px;height:2px;background:#cacaca;"></div>
<div style="left:1210px;top:1030px;width:2px;height:68px;background:#c8c8c8;"></div>
<div style="left:1138.40px;top:1073.00px;font-size:23px;line-height:23px;font-weight:400;color:#727272;letter-spacing:-0.724px;white-space:pre;">Load</div>
<div style="left:1656px;top:1024px;width:118px;height:80px;background:#ececec;"></div>
<div style="left:1656px;top:1102px;width:118px;height:2px;background:#cacaca;"></div>
<div style="left:1770px;top:1030px;width:2px;height:68px;background:#c8c8c8;"></div>
<div style="left:1680.70px;top:1073.00px;font-size:23px;line-height:23px;font-weight:400;color:#000;letter-spacing:-0.322px;white-space:pre;">Cancel</div>
<div style="left:1782px;top:1024px;width:118px;height:80px;background:#ececec;"></div>
<div style="left:1782px;top:1102px;width:118px;height:2px;background:#cacaca;"></div>
<div style="left:1896px;top:1030px;width:2px;height:68px;background:#c8c8c8;"></div>
<div style="left:1817.20px;top:1073.00px;font-size:23px;line-height:23px;font-weight:400;color:#000;letter-spacing:-1.479px;white-space:pre;">Save</div>
<svg style="left:58px;top:1033px;" width="30" height="30" viewBox="0 0 30 30"><rect x="1.5" y="1.5" width="13" height="12" fill="#d6e9c9" stroke="#a9a9a9" stroke-width="1.3"/><rect x="7.5" y="9.5" width="13" height="12" fill="#d6e9c9" stroke="#a9a9a9" stroke-width="1.3"/><rect x="13.5" y="16.5" width="13" height="12" fill="#d6e9c9" stroke="#a9a9a9" stroke-width="1.3"/><path d="M20 6 L27 0.5 L27 11.5 Z" fill="#8c8c8c"/></svg>
<svg style="left:207px;top:1035px;" width="34" height="28" viewBox="0 0 34 28"><rect x="11.5" y="1.5" width="15" height="19" fill="none" stroke="#6a6a6a" stroke-width="2"/><path d="M11.5 8 H26.5 M11.5 14 H26.5" stroke="#6a6a6a" stroke-width="2"/><rect x="19.5" y="19.5" width="13" height="7" fill="#f0f0f0" stroke="#6a6a6a" stroke-width="2"/><path d="M1 9.5 H8 M6 5 L11 9.5 L6 14 Z" stroke="#6a6a6a" stroke-width="3" fill="#6a6a6a"/></svg>
<svg style="left:358px;top:1030px;" width="24" height="36" viewBox="0 0 24 36"><defs><linearGradient id="cb" x1="0" y1="0" x2="0" y2="1"><stop offset="0" stop-color="#f4f4f4"/><stop offset="1" stop-color="#c4c4c4"/></linearGradient></defs><path d="M10 2 H14 V8.5 H18 L14 14 H10 L6 8.5 H10 Z" fill="#f3a19c"/><rect x="4" y="14" width="16" height="20" fill="#8a8a8a"/><rect x="5.8" y="15.8" width="12.4" height="4.6" fill="url(#cb)"/><rect x="5.8" y="22" width="12.4" height="4.6" fill="url(#cb)"/><rect x="5.8" y="28.2" width="12.4" height="4.2" fill="url(#cb)"/></svg>
<svg style="left:488px;top:1035px;" width="26" height="26" viewBox="0 0 26 26"><path d="M0.6 1 H3.6 L12 9.2 L20.3 1 H24 V4.7 L16.1 13 L24 21.4 V25 H20.6 L12 16.9 L3.6 25 H0.6 V21.5 L8.1 13 L0.6 4.7 Z" fill="#e89e9a"/></svg>
<svg style="left:658px;top:1032px;" width="32" height="30" viewBox="0 0 32 30"><defs><linearGradient id="mbx" x1="0" y1="0" x2="1" y2="1"><stop offset="0.3" stop-color="#f2f2f2"/><stop offset="1" stop-color="#d6d6d6"/></linearGradient><linearGradient id="mbl" x1="0" y1="0" x2="0" y2="1"><stop offset="0" stop-color="#c2d2e0"/><stop offset="0.5" stop-color="#a6bccd"/><stop offset="1" stop-color="#7f98ad"/></linearGradient></defs><rect x="2" y="4" width="28" height="24" fill="url(#mbx)"/><rect x="2.5" y="4.5" width="27" height="5" fill="#dedede"/><path d="M2.5 4.5 H29.5 V27.5 H2.5 Z M2.5 9.5 H29.5" fill="none" stroke="#a9a9a9" stroke-width="1.4"/><rect x="4.5" y="20.5" width="23" height="6" fill="#f8f8f8" stroke="#bdbdbd" stroke-width="1"/><g transform="translate(7 25.5) rotate(-53.5)"><path d="M0 0 L6.5 -3.2 L6.5 3.2 Z" fill="#f2eaa8"/><rect x="6.5" y="-3.2" width="15" height="6.4" fill="url(#mbl)"/><rect x="21.5" y="-3.2" width="2.5" height="6.4" fill="#f0eca0"/><rect x="24" y="-3.4" width="4.5" height="6.8" fill="#f2a3a0"/><circle cx="1" cy="0" r="1.3" fill="#8a8a8a"/></g></svg>
<svg style="left:806px;top:1034px;" width="32" height="30" viewBox="0 0 32 30"><rect x="0" y="5.8" width="32" height="2.2" fill="#8e9ccc"/><rect x="6" y="2" width="8" height="2" fill="#b3b8f0"/><rect x="16" y="2" width="6" height="2" fill="#b3b8f0"/><rect x="24" y="2" width="6" height="2" fill="#b3b8f0"/><rect x="0" y="10.0" width="2" height="2" fill="#7b86b8"/><rect x="6" y="10.0" width="8" height="2" fill="#b3b8f0"/><rect x="16" y="10.0" width="6" height="2" fill="#b3b8f0"/><rect x="24" y="10.0" width="6" height="2" fill="#b3b8f0"/><rect x="0" y="14.1" width="2" height="2" fill="#7b86b8"/><rect x="6" y="14.1" width="8" height="2" fill="#b5ecb8"/><rect x="16" y="14.1" width="6" height="2" fill="#b5ecb8"/><rect x="24" y="14.1" width="6" height="2" fill="#b5ecb8"/><rect x="0" y="18.2" width="2" height="2" fill="#7b86b8"/><rect x="6" y="18.2" width="8" height="2" fill="#f3b4b4"/><rect x="16" y="18.2" width="6" height="2" fill="#f3b4b4"/><rect x="24" y="18.2" width="6" height="2" fill="#f3b4b4"/><rect x="0" y="22.299999999999997" width="2" height="2" fill="#7b86b8"/><rect x="6" y="22.299999999999997" width="8" height="2" fill="#b3b8f0"/><rect x="16" y="22.299999999999997" width="6" height="2" fill="#b3b8f0"/><rect x="24" y="22.299999999999997" width="6" height="2" fill="#b3b8f0"/><rect x="0" y="26.4" width="2" height="2" fill="#7b86b8"/><rect x="6" y="26.4" width="8" height="2" fill="#b5ecb8"/><rect x="16" y="26.4" width="6" height="2" fill="#b5ecb8"/><rect x="24" y="26.4" width="6" height="2" fill="#b5ecb8"/></svg>
<svg style="left:922px;top:1028px;" width="40" height="38" viewBox="0 0 40 38"><defs><linearGradient id="pg" x1="0" y1="0" x2="0" y2="1"><stop offset="0" stop-color="#d8d8d8"/><stop offset="0.5" stop-color="#b8b8b8"/><stop offset="1" stop-color="#c8c8c8"/></linearGradient><linearGradient id="pp" x1="0" y1="0" x2="0" y2="1"><stop offset="0" stop-color="#f4f4f4"/><stop offset="1" stop-color="#e2e2e2"/></linearGradient></defs><rect x="11.5" y="7" width="15" height="9" fill="url(#pp)" stroke="#dddddd" stroke-width="0.8"/><rect x="6.5" y="14.5" width="25" height="13.5" rx="2.5" fill="url(#pg)"/><path d="M12 15.6 H26 M12 22.6 H26" stroke="#8e8e8e" stroke-width="1.2"/><path d="M11.5 23.5 H26.5 L26 31.5 H12 Z" fill="#f3f3f3" stroke="#d6d6d6" stroke-width="0.8"/></svg>
<svg style="left:1044px;top:1032px;" width="24" height="31" viewBox="0 0 24 31"><defs><linearGradient id="dg" x1="0" y1="0" x2="0" y2="1"><stop offset="0" stop-color="#ffffff"/><stop offset="1" stop-color="#bcd6f6"/></linearGradient></defs><path d="M1.5 1.5 H16 L22.5 8 V29.5 H1.5 Z" fill="url(#dg)" stroke="#7b8fc2" stroke-width="1.2"/><path d="M16 1.5 L22.5 8 H16 Z" fill="#4a90e2"/><path d="M5 15 L9 19.5 L16 10" fill="none" stroke="#ee1d24" stroke-width="2"/></svg>
<svg style="left:1146px;top:1028px;" width="36" height="38" viewBox="0 0 36 38"><path d="M9 29 V15.5 L10.5 14.5 H13 L15 17 H18 V29 Z" fill="#f3dfae" stroke="#e6c891" stroke-width="0.8"/><circle cx="20.5" cy="16" r="7.5" fill="#d4e6f6"/><path d="M17 11 L21 9.5 L23 13 L20 17 L18 15 Z" fill="#eef4fa"/><path d="M10.5 29.5 L12.5 20.8 L28 17.8 L25.5 26.5 Z" fill="#f7edc4" stroke="#e9cf98" stroke-width="0.9"/><path d="M17.5 20 L20.5 24 L23.5 19" fill="#d8ecf8"/></svg>
<svg style="left:1696px;top:1030px;" width="32" height="32" viewBox="0 0 32 32"><rect x="6" y="8" width="2" height="2" fill="#7f8c8e"/><rect x="6" y="22" width="2" height="2" fill="#7f8c8e"/><rect x="8" y="6" width="2" height="2" fill="#7f8c8e"/><rect x="8" y="10" width="2" height="2" fill="#7f8c8e"/><rect x="8" y="20" width="2" height="2" fill="#7f8c8e"/><rect x="8" y="24" width="2" height="2" fill="#7f8c8e"/><rect x="10" y="8" width="2" height="2" fill="#7f8c8e"/><rect x="10" y="12" width="2" height="2" fill="#7f8c8e"/><rect x="10" y="18" width="2" height="2" fill="#7f8c8e"/><rect x="10" y="22" width="2" height="2" fill="#7f8c8e"/><rect x="12" y="10" width="2" height="2" fill="#7f8c8e"/><rect x="12" y="14" width="2" height="2" fill="#7f8c8e"/><rect x="12" y="16" width="2" height="2" fill="#7f8c8e"/><rect x="12" y="20" width="2" height="2" fill="#7f8c8e"/><rect x="14" y="12" width="2" height="2" fill="#7f8c8e"/><rect x="14" y="18" width="2" height="2" fill="#7f8c8e"/><rect x="16" y="12" width="2" height="2" fill="#7f8c8e"/><rect x="16" y="18" width="2" height="2" fill="#7f8c8e"/><rect x="18" y="10" width="2" height="2" fill="#7f8c8e"/><rect x="18" y="14" width="2" height="2" fill="#7f8c8e"/><rect x="18" y="16" width="2" height="2" fill="#7f8c8e"/><rect x="18" y="20" width="2" height="2" fill="#7f8c8e"/><rect x="20" y="8" width="2" height="2" fill="#7f8c8e"/><rect x="20" y="12" width="2" height="2" fill="#7f8c8e"/><rect x="20" y="18" width="2" height="2" fill="#7f8c8e"/><rect x="20" y="22" width="2" height="2" fill="#7f8c8e"/><rect x="22" y="6" width="2" height="2" fill="#7f8c8e"/><rect x="22" y="10" width="2" height="2" fill="#7f8c8e"/><rect x="22" y="20" width="2" height="2" fill="#7f8c8e"/><rect x="22" y="24" width="2" height="2" fill="#7f8c8e"/><rect x="24" y="8" width="2" height="2" fill="#7f8c8e"/><rect x="24" y="22" width="2" height="2" fill="#7f8c8e"/><rect x="6" y="6" width="2" height="2" fill="#ff1a10"/><rect x="6" y="24" width="2" height="2" fill="#ff1a10"/><rect x="8" y="8" width="2" height="2" fill="#ff1a10"/><rect x="8" y="22" width="2" height="2" fill="#ff1a10"/><rect x="10" y="10" width="2" height="2" fill="#ff1a10"/><rect x="10" y="20" width="2" height="2" fill="#ff1a10"/><rect x="12" y="12" width="2" height="2" fill="#ff1a10"/><rect x="12" y="18" width="2" height="2" fill="#ff1a10"/><rect x="14" y="14" width="2" height="2" fill="#ff1a10"/><rect x="14" y="16" width="2" height="2" fill="#ff1a10"/><rect x="16" y="14" width="2" height="2" fill="#ff1a10"/><rect x="16" y="16" width="2" height="2" fill="#ff1a10"/><rect x="18" y="12" width="2" height="2" fill="#ff1a10"/><rect x="18" y="18" width="2" height="2" fill="#ff1a10"/><rect x="20" y="10" width="2" height="2" fill="#ff1a10"/><rect x="20" y="20" width="2" height="2" fill="#ff1a10"/><rect x="22" y="8" width="2" height="2" fill="#ff1a10"/><rect x="22" y="22" width="2" height="2" fill="#ff1a10"/><rect x="24" y="6" width="2" height="2" fill="#ff1a10"/><rect x="24" y="24" width="2" height="2" fill="#ff1a10"/></svg>
<svg style="left:1816px;top:1026px;" width="44" height="42" viewBox="0 0 44 42"><rect x="10" y="12" width="26" height="24" fill="#000"/><rect x="28" y="10" width="8" height="2" fill="#000"/><rect x="12" y="14" width="4" height="20" fill="#0a2ff0"/><rect x="30" y="16" width="4" height="18" fill="#0a2ff0"/><rect x="16" y="24.3" width="14" height="2" fill="#0a2ff0"/><rect x="16.5" y="12" width="13.5" height="10" fill="#fff"/><rect x="18" y="12" width="8" height="7.6" fill="#000"/><rect x="32" y="12" width="2" height="2" fill="#9a9a9a"/><rect x="18" y="28" width="4" height="6" fill="#c4c4c4"/><path d="M12.5 7.5 L21 14.5" stroke="#fff" stroke-width="5"/><path d="M12.5 7.5 L21 14.5" stroke="#000" stroke-width="3"/></svg>
</div></body></html>
